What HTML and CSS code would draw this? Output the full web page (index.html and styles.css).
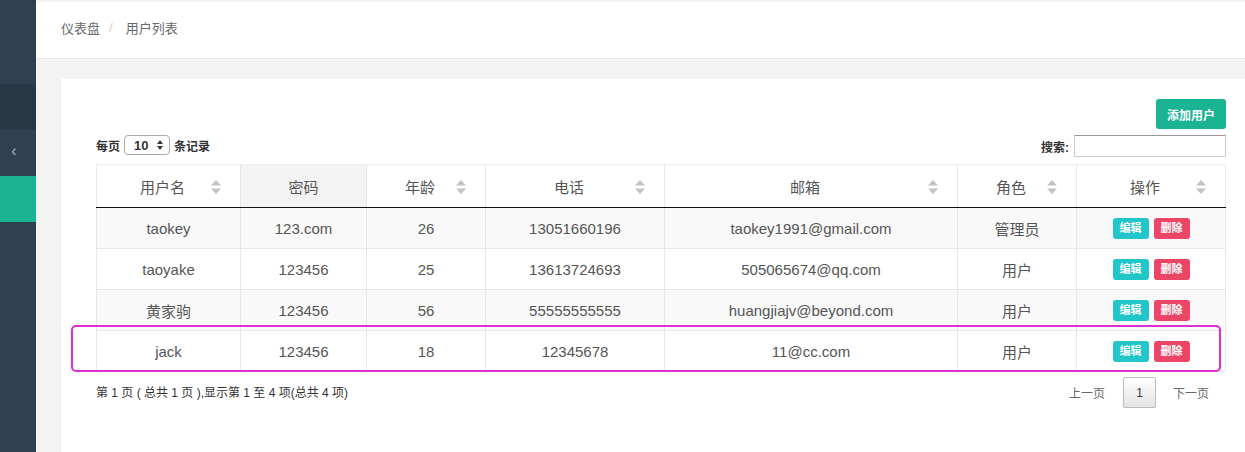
FILE: index.html
```html
<!DOCTYPE html>
<html lang="zh">
<head>
<meta charset="utf-8">
<title>用户列表</title>
<link rel="stylesheet" href="styles.css">
</head>
<body>
<div class="app">
  <aside class="sidebar">
    <div class="sb-top"></div>
    <div class="sb-dark"></div>
    <div class="sb-toggle">&lsaquo;</div>
    <div class="sb-active"></div>
  </aside>
  <main class="main">
    <header class="header">
      <span class="crumb">仪表盘</span><span class="sep">/</span><span class="crumb">用户列表</span>
    </header>
    <div class="content">
      <section class="card">
        <div class="toolbar">
          <button class="btn-add">添加用户</button>
        </div>
        <div class="controls">
          <div class="length">每页 <span class="select">10<svg class="updown" viewBox="0 0 6 10" width="6" height="10"><path d="M3 0L6 4H0z"/><path d="M3 10L0 6H6z"/></svg></span> 条记录</div>
          <div class="search">搜索: <span class="input"></span></div>
        </div>
        <table class="grid">
          <colgroup>
            <col class="c1"><col class="c2"><col class="c3"><col class="c4"><col class="c5"><col class="c6"><col class="c7">
          </colgroup>
          <thead>
            <tr>
              <th>用户名<svg class="sort" viewBox="0 0 10 14" width="10" height="14"><path d="M5 0L10 5.5H0z"/><path d="M5 14L0 8.5H10z"/></svg></th>
              <th class="nosort">密码</th>
              <th>年龄<svg class="sort" viewBox="0 0 10 14" width="10" height="14"><path d="M5 0L10 5.5H0z"/><path d="M5 14L0 8.5H10z"/></svg></th>
              <th>电话<svg class="sort" viewBox="0 0 10 14" width="10" height="14"><path d="M5 0L10 5.5H0z"/><path d="M5 14L0 8.5H10z"/></svg></th>
              <th>邮箱<svg class="sort" viewBox="0 0 10 14" width="10" height="14"><path d="M5 0L10 5.5H0z"/><path d="M5 14L0 8.5H10z"/></svg></th>
              <th>角色<svg class="sort" viewBox="0 0 10 14" width="10" height="14"><path d="M5 0L10 5.5H0z"/><path d="M5 14L0 8.5H10z"/></svg></th>
              <th>操作<svg class="sort" viewBox="0 0 10 14" width="10" height="14"><path d="M5 0L10 5.5H0z"/><path d="M5 14L0 8.5H10z"/></svg></th>
            </tr>
          </thead>
          <tbody>
            <tr class="odd"><td>taokey</td><td>123.com</td><td>26</td><td>13051660196</td><td>taokey1991@gmail.com</td><td>管理员</td><td><span class="b-edit">编辑</span><span class="b-del">删除</span></td></tr>
            <tr><td>taoyake</td><td>123456</td><td>25</td><td>13613724693</td><td>505065674@qq.com</td><td>用户</td><td><span class="b-edit">编辑</span><span class="b-del">删除</span></td></tr>
            <tr class="odd"><td>黄家驹</td><td>123456</td><td>56</td><td>55555555555</td><td>huangjiajv@beyond.com</td><td>用户</td><td><span class="b-edit">编辑</span><span class="b-del">删除</span></td></tr>
            <tr><td>jack</td><td>123456</td><td>18</td><td>12345678</td><td>11@cc.com</td><td>用户</td><td><span class="b-edit">编辑</span><span class="b-del">删除</span></td></tr>
          </tbody>
        </table>
        <div class="footer">
          <div class="info">第 1 页 ( 总共 1 页 ),显示第 1 至 4 项(总共 4 项)</div>
          <div class="pager">
            <span class="pg-prev">上一页</span>
            <span class="pg-cur">1</span>
            <span class="pg-next">下一页</span>
          </div>
        </div>
        <div class="highlight"></div>
      </section>
    </div>
  </main>
</div>
</body>
</html>
```

FILE: styles.css
```css
* { box-sizing: border-box; }
html, body { margin: 0; padding: 0; height: 100%; }
body {
  font-family: "Liberation Sans", "Noto Sans CJK SC", sans-serif;
  background: #f3f3f4;
  color: #555;
  overflow: hidden;
}
.app { display: flex; height: 452px; }
.sidebar {
  width: 36px;
  flex: none;
  background: #2f4050;
  display: flex;
  flex-direction: column;
}
.sb-top { height: 84px; }
.sb-dark { height: 46px; background: #293846; }
.sb-toggle {
  height: 46px;
  color: #a7b1c2;
  font-size: 16px;
  display: flex;
  align-items: center;
  justify-content: center;
  padding-right: 8px;
  padding-bottom: 4px;
}
.sb-active { height: 46px; background: #1ab394; }

.main { flex: 1; display: flex; flex-direction: column; min-width: 0; }
.header {
  margin-top: 2px;
  height: 57px;
  background: #fff;
  border-bottom: 1px solid #e7eaec;
  display: flex;
  align-items: center;
  padding-left: 25px;
  padding-bottom: 5px;
  font-size: 13px;
  color: #676a6c;
}
.sep { color: #ccc; margin: 0 13px 0 9px; }
.content { flex: 1; padding: 20px 0 0 25px; }
.card {
  position: relative;
  background: #fff;
  height: 100%;
  padding: 20px 19px 0 35px;
}
.toolbar { display: flex; justify-content: flex-end; }
.btn-add {
  width: 70px;
  height: 30px;
  border: none;
  border-radius: 3px;
  background: #1ab394;
  color: #fff;
  font-family: inherit;
  font-size: 12px;
  font-weight: bold;
  padding: 0;
}
.controls {
  margin-top: 6px;
  height: 29px;
  display: flex;
  justify-content: space-between;
  align-items: flex-start;
  font-size: 12px;
  font-weight: bold;
  color: #333;
}
.length { display: flex; align-items: center; height: 20px; }
.select {
  display: inline-flex;
  align-items: center;
  justify-content: space-between;
  width: 46px;
  height: 20px;
  margin: 0 4px;
  padding: 0 6px 0 9px;
  border: 1px solid #aaa;
  border-radius: 4px;
  font-size: 13px;
  background: #fff;
}
.updown { fill: #333; }
.search { display: flex; align-items: center; height: 22px; }
.input {
  display: inline-block;
  width: 152px;
  height: 22px;
  margin-left: 5px;
  border: 1px solid #ccc;
  border-top-color: #999;
}
.grid {
  width: 1129px;
  table-layout: fixed;
  border-collapse: collapse;
  font-size: 15px;
  color: #555;
}
.c1 { width: 144px; }
.c2 { width: 126px; }
.c3 { width: 119px; }
.c4 { width: 179px; }
.c5 { width: 293px; }
.c6 { width: 119px; }
.c7 { width: 149px; }
.grid th, .grid td { text-align: center; border: 1px solid #e7e7e7; }
.grid th {
  height: 43px;
  font-weight: normal;
  border-top-color: #eee;
  border-bottom: 1px solid #111;
  position: relative;
  padding: 0 12px 0 0;
}
.grid th.nosort { background: #f3f3f4; padding: 0; }
.sort {
  position: absolute;
  right: 19px;
  top: 15px;
  fill: #c2c2c2;
}
.grid td { height: 41px; padding: 0; }
.grid tr.odd td { background: #f9f9f9; }
.b-edit, .b-del {
  display: inline-block;
  width: 36px;
  height: 21px;
  line-height: 21px;
  border-radius: 3px;
  color: #fff;
  font-size: 11px;
  font-weight: bold;
  vertical-align: middle;
}
.b-edit { background: #23c6c8; }
.b-del { background: #ed4566; margin-left: 5px; }
.footer {
  margin-top: 5px;
  display: flex;
  justify-content: space-between;
  align-items: center;
  font-size: 12px;
  color: #333;
  width: 1130px;
}
.info { padding-bottom: 3px; }
.pager { display: flex; align-items: center; font-size: 12px; color: #666; }
.pg-prev { padding-right: 18px; }
.pg-next { padding-left: 17px; padding-right: 17px; }
.pg-cur {
  width: 33px;
  height: 31px;
  display: flex;
  align-items: center;
  justify-content: center;
  border: 1px solid #bbb;
  border-radius: 2px;
  background: linear-gradient(#fff, #e4e4e4);
  color: #333;
}
.highlight {
  position: absolute;
  left: 10px;
  top: 246px;
  width: 1150px;
  height: 47px;
  border: 2px solid #dd30cf;
  border-radius: 5px;
  pointer-events: none;
}
```
